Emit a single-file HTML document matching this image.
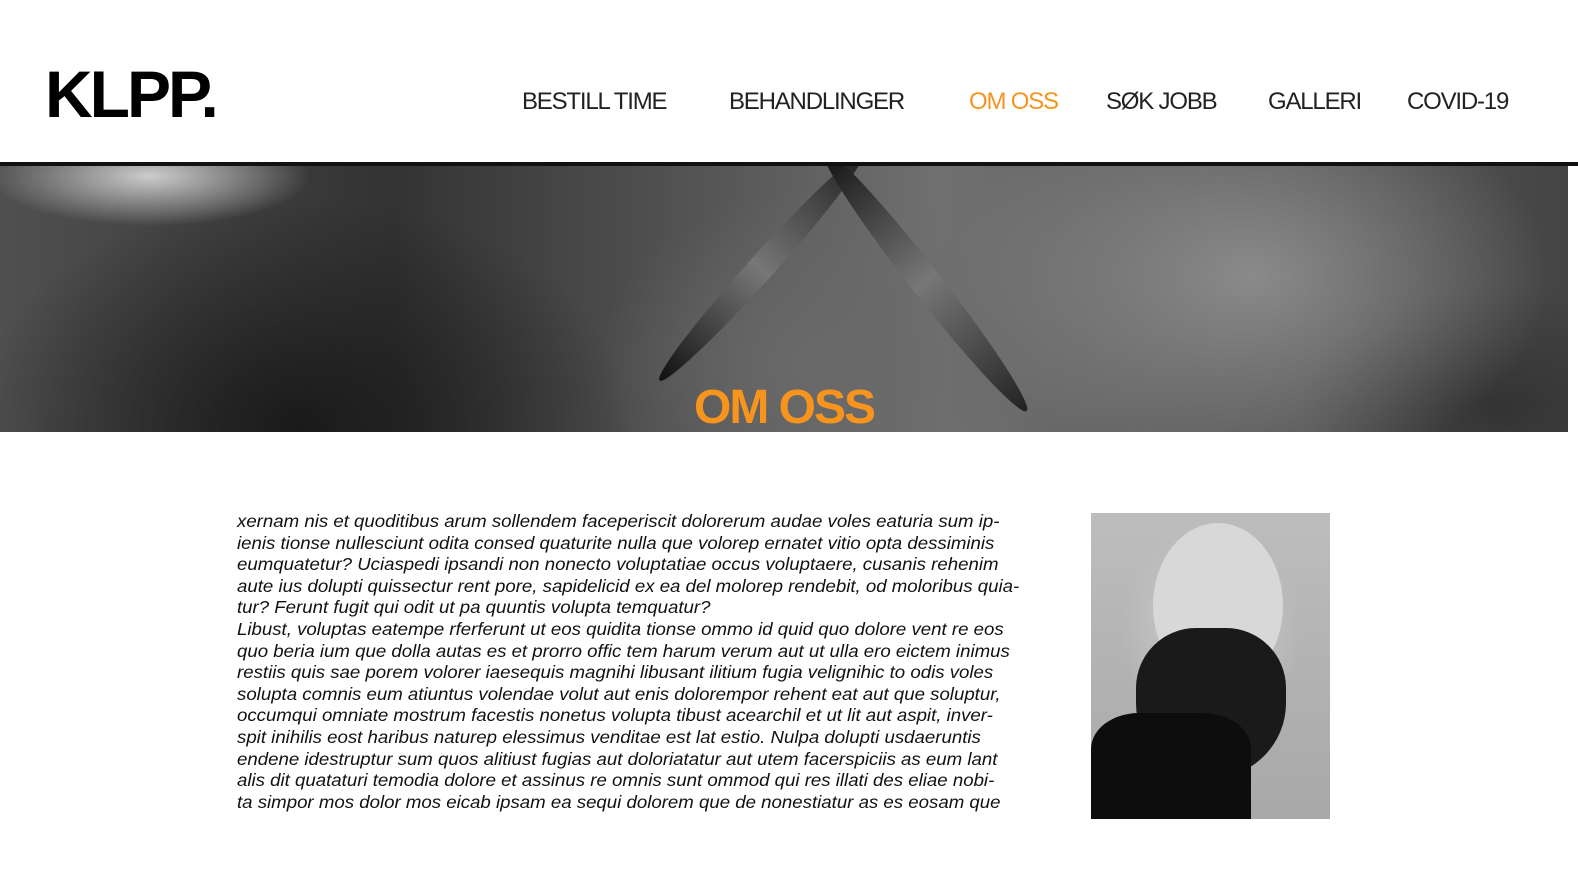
<!DOCTYPE html>
<html><head><meta charset="utf-8"><style>
*{margin:0;padding:0;box-sizing:border-box}
body{width:1578px;height:885px;background:#fff;font-family:"Liberation Sans",sans-serif;position:relative;overflow:hidden}
.logo{position:absolute;left:45px;top:56px;font-size:66px;font-weight:bold;letter-spacing:-3px;color:#000}
.nav{position:absolute;top:88px;font-size:24px;color:#222;letter-spacing:-1.2px;white-space:nowrap}
.line{position:absolute;left:0;top:162px;width:1578px;height:4px;background:#111}
.hero{position:absolute;left:0;top:166px;width:1568px;height:266px;overflow:hidden;
background:
radial-gradient(ellipse 160px 50px at 150px 10px,#ccc,transparent),
radial-gradient(ellipse 330px 230px at 300px 260px,#1a1a1a,transparent),
radial-gradient(ellipse 220px 180px at 820px 200px,#6a6a6a,transparent),
radial-gradient(ellipse 300px 200px at 1250px 110px,#8a8a8a,transparent),
radial-gradient(ellipse 200px 120px at 1500px 240px,#333,transparent),
linear-gradient(90deg,#505050 0%,#333 25%,#555 45%,#707070 60%,#555 85%,#444 100%)}
.blade{position:absolute;background:linear-gradient(90deg,#111,#777,#222);border-radius:50%}
.title{position:absolute;left:0;width:1568px;text-align:center;top:380px;font-size:48px;font-weight:bold;color:#f7941d;letter-spacing:-2px}
.txt{position:absolute;left:237px;top:511px;font-size:17.5px;line-height:21.6px;font-style:italic;color:#111;white-space:nowrap;transform:scaleX(1.065);transform-origin:left}
.photo{position:absolute;left:1091px;top:513px;width:239px;height:306px;overflow:hidden;
background:radial-gradient(ellipse 90px 110px at 120px 120px,#cfcfcf,transparent),linear-gradient(#bdbdbd,#a8a8a8)}
</style></head><body>
<div class="logo">KLPP.</div>
<div class="nav" style="left:522px">BESTILL TIME</div>
<div class="nav" style="left:729px">BEHANDLINGER</div>
<div class="nav" style="left:969px;color:#f7941d">OM OSS</div>
<div class="nav" style="left:1106px">SØK JOBB</div>
<div class="nav" style="left:1268px">GALLERI</div>
<div class="nav" style="left:1407px">COVID-19</div>
<div class="line"></div>
<div class="hero">
<div class="blade" style="left:610px;top:90px;width:300px;height:26px;transform:rotate(-48deg)"></div>
<div class="blade" style="left:760px;top:100px;width:330px;height:30px;transform:rotate(52deg)"></div>
</div>
<div class="title">OM OSS</div>
<div class="txt">xernam nis et quoditibus arum sollendem faceperiscit dolorerum audae voles eaturia sum ip-<br>ienis tionse nullesciunt odita consed quaturite nulla que volorep ernatet vitio opta dessiminis<br>eumquatetur? Uciaspedi ipsandi non nonecto voluptatiae occus voluptaere, cusanis rehenim<br>aute ius dolupti quissectur rent pore, sapidelicid ex ea del molorep rendebit, od moloribus quia-<br>tur? Ferunt fugit qui odit ut pa quuntis volupta temquatur?<br>Libust, voluptas eatempe rferferunt ut eos quidita tionse ommo id quid quo dolore vent re eos<br>quo beria ium que dolla autas es et prorro offic tem harum verum aut ut ulla ero eictem inimus<br>restiis quis sae porem volorer iaesequis magnihi libusant ilitium fugia velignihic to odis voles<br>solupta comnis eum atiuntus volendae volut aut enis dolorempor rehent eat aut que soluptur,<br>occumqui omniate mostrum facestis nonetus volupta tibust acearchil et ut lit aut aspit, inver-<br>spit inihilis eost haribus naturep elessimus venditae est lat estio. Nulpa dolupti usdaeruntis<br>endene idestruptur sum quos alitiust fugias aut doloriatatur aut utem facerspiciis as eum lant<br>alis dit quataturi temodia dolore et assinus re omnis sunt ommod qui res illati des eliae nobi-<br>ta simpor mos dolor mos eicab ipsam ea sequi dolorem que de nonestiatur as es eosam que</div>
<div class="photo">
<div style="position:absolute;left:62px;top:10px;width:130px;height:165px;border-radius:50%;background:#d8d8d8"></div>
<div style="position:absolute;left:45px;top:115px;width:150px;height:150px;border-radius:40% 40% 50% 50%;background:#1a1a1a"></div>
<div style="position:absolute;left:0;top:200px;width:160px;height:120px;border-radius:30% 30% 0 0;background:#0d0d0d"></div>
</div>
</body></html>
